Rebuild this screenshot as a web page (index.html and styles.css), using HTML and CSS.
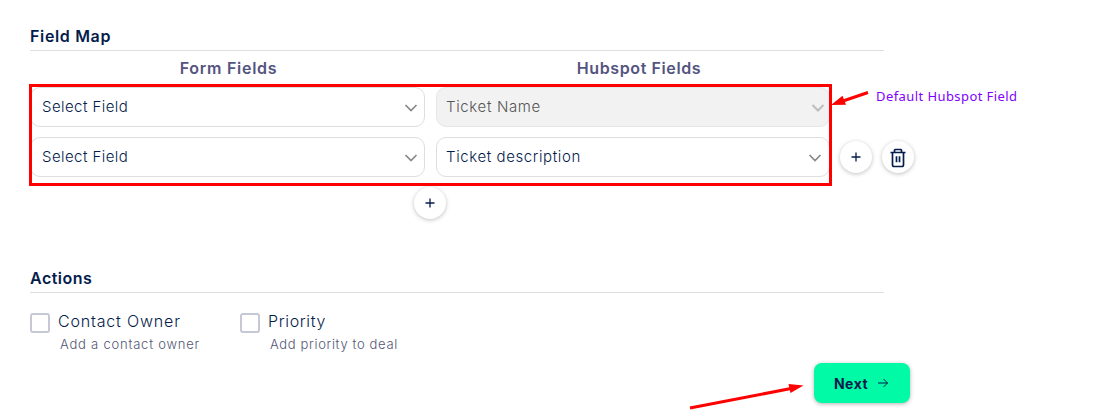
FILE: index.html
```html
<!DOCTYPE html>
<html lang="en">
<head>
<meta charset="utf-8">
<title>Field Map</title>
<link rel="stylesheet" href="styles.css">
</head>
<body>
<main class="page">
  <section class="map">
    <h2 class="title"><span class="t-map">Field Map</span></h2>
    <div class="heads"><span class="head h-form">Form Fields</span><span class="head h-hub">Hubspot Fields</span></div>
    <div class="rows">
      <div class="row">
        <div class="select"><span class="s-field">Select Field</span><svg class="chev" viewBox="0 0 14 8"><path d="M1.500 1 7 6.500 12.500 1"/></svg></div>
        <div class="select disabled"><span class="s-name">Ticket Name</span><svg class="chev" viewBox="0 0 14 8"><path d="M1.500 1 7 6.500 12.500 1"/></svg></div>
      </div>
      <div class="row">
        <div class="select"><span class="s-field">Select Field</span><svg class="chev" viewBox="0 0 14 8"><path d="M1.500 1 7 6.500 12.500 1"/></svg></div>
        <div class="select"><span class="s-desc">Ticket description</span><svg class="chev" viewBox="0 0 14 8"><path d="M1.500 1 7 6.500 12.500 1"/></svg></div>
        <button class="round"><svg class="plus" viewBox="0 0 10 10"><path d="M5 .5v9M.5 5h9"/></svg></button>
        <button class="round"><svg class="trash" viewBox="0 0 18 20"><path d="M1.500 4.500h15M5.500 4V2.200Q5.500 1.500 6.200 1.500h5.600q.7 0 .7.700V4M3.500 4.500v12.300q0 1.700 1.700 1.700h7.600q1.700 0 1.700-1.700V4.500M7.500 8.300v6M10.500 8.300v6"/></svg></button>
      </div>
    </div>
    <button class="round add"><svg class="plus" viewBox="0 0 10 10"><path d="M5 .5v9M.5 5h9"/></svg></button>
  </section>
  <section class="actions">
    <h2 class="title"><span class="t-act">Actions</span></h2>
    <div class="options">
      <label class="option"><i class="box"></i><span class="label l-owner">Contact Owner</span><small class="hint hi-owner">Add a contact owner</small></label>
      <label class="option"><i class="box"></i><span class="label l-pri">Priority</span><small class="hint hi-pri">Add priority to deal</small></label>
    </div>
  </section>
  <button class="next"><span class="n-text">Next</span><svg class="arrow" viewBox="0 0 10 10"><path d="M0 5h9.500M5.500 1l4 4-4 4"/></svg></button>
</main>
<div class="frame"></div>
<svg class="marks" viewBox="0 0 1112 418"><path class="line" d="M868 92.500 843 101M690 408 791 388.500"/><path class="tip" d="M831 105 842.500 95.800 846 104.700ZM803.500 385.500 788.500 384 790.500 393Z"/></svg>
<span class="note">Default Hubspot Field</span>
</body>
</html>
```
FILE: styles.css
```css
* { box-sizing: border-box; }
body { margin: 0; width: 1112px; height: 418px; overflow: hidden; position: relative; background: #fff; color: #041c4c; font-family: Inter, sans-serif; }
button { font: inherit; color: inherit; border: 0; padding: 0; }
svg { fill: none; stroke: currentColor; display: block; }
span, small { white-space: nowrap; }
.page { padding: 23px 0 0 30px; display: flex; flex-direction: column; align-items: flex-start; }
.title { margin: 0; width: 854px; height: 28px; border-bottom: 1px solid #dedede; font-size: 16px; line-height: 27px; font-weight: 600; }
.t-map { letter-spacing: .65px; }
.t-act { letter-spacing: .5px; }
.heads { display: grid; grid-template-columns: 397px 424px; height: 36px; }
.head { text-align: center; font-size: 16px; line-height: 35px; font-weight: 600; color: #54547f; }
.h-form { letter-spacing: .74px; }
.h-hub { letter-spacing: .6px; }
.rows { display: grid; row-gap: 10px; }
.row { display: flex; align-items: center; gap: 10px; }
.select { width: 395px; height: 40px; border: 1px solid #dedede; border-radius: 10px; padding: 0 6px 2px 11px; display: flex; align-items: center; justify-content: space-between; font-size: 15px; font-weight: 300; }
.select + .select { width: 394px; padding-left: 9px; padding-right: 7px; margin-left: 1px; }
.select + .select.disabled { background: #f2f2f2; border-color: #e6e6e6; color: #555; padding-right: 4px; }
.s-field { letter-spacing: .43px; }
.s-name { letter-spacing: .64px; }
.s-desc { letter-spacing: .6px; }
.chev { width: 14px; height: 8px; color: #888; stroke-width: 1.7; margin-top: 3px; }
.disabled .chev { color: #bebebe; stroke-width: 2; }
.round { width: 32px; height: 32px; flex: none; border-radius: 50%; background: #fff; box-shadow: 0 1px 4px rgba(0,0,0,.25); display: flex; align-items: center; justify-content: center; }
.plus { width: 10px; height: 10px; stroke-width: 1.3; margin-bottom: 1px; }
.trash { width: 18px; height: 20px; stroke-width: 1.7; margin-top: 2px; }
.add { margin: 10px 0 0 384px; }
.actions { margin-top: 46px; }
.options { display: flex; padding-top: 17px; }
.option { width: 210px; display: grid; grid-template-columns: 28px auto; grid-template-rows: 24px 20px; align-items: center; justify-content: start; }
.box { width: 20px; height: 20px; border: 2px solid #c6c9d5; border-radius: 3px; margin-top: 3px; align-self: start; }
.label { font-size: 16px; line-height: 23px; font-weight: 300; align-self: start; }
.l-owner { letter-spacing: .82px; }
.l-pri { letter-spacing: .65px; }
.hint { grid-column: 2; padding-left: 2px; font-size: 13px; font-weight: 300; color: #535675; }
.hi-owner { letter-spacing: .78px; }
.hi-pri { letter-spacing: .64px; }
.next { margin: 9px 0 0 784px; width: 96px; height: 40px; border-radius: 8px; background: #00faa6; box-shadow: 0 1px 4px rgba(0,0,0,.3); display: flex; align-items: center; padding-left: 20px; font-size: 14px; font-weight: 700; }
.n-text { width: 44px; text-align: left; letter-spacing: .45px; }
.arrow { width: 10px; height: 10px; stroke-width: 1; }
.frame { position: absolute; left: 29px; top: 84px; width: 803px; height: 102px; border: 3px solid #f00; }
.marks { position: absolute; left: 0; top: 0; width: 1112px; height: 418px; }
.line { stroke: #f00; stroke-width: 3; }
.tip { fill: #f00; stroke: none; }
.note { position: absolute; left: 876px; top: 87px; font: 13px/19px "Noto Sans", sans-serif; letter-spacing: .42px; color: #8000ff; }
```
